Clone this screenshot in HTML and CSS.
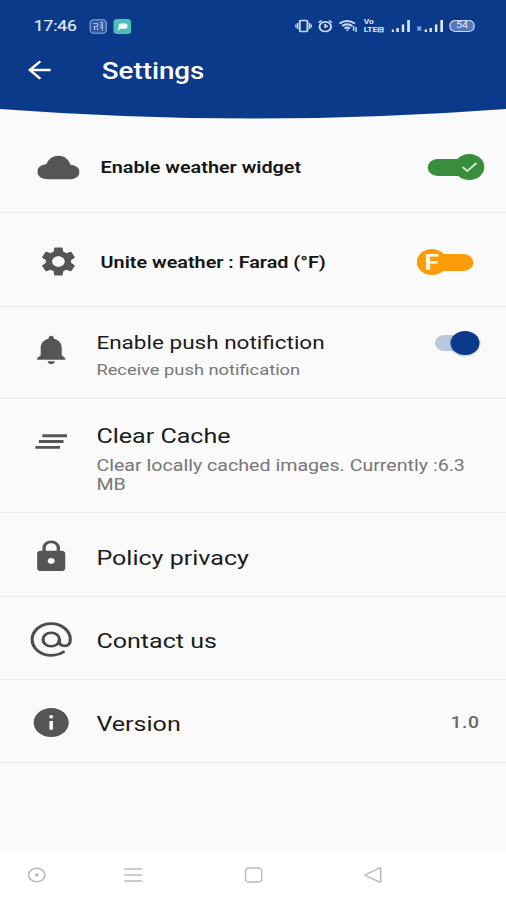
FILE: index.html
```html
<!DOCTYPE html>
<html lang="en">
<head>
<meta charset="utf-8">
<title>Settings</title>
<link rel="stylesheet" href="styles.css">
</head>
<body>
<div class="screen">
  <header class="header">
    <div class="status">
      <span class="time">17:46</span>
      <svg class="app-a" width="15" height="15" viewBox="0 0 15 15"><rect x=".8" y=".8" width="13.4" height="13.4" rx="3" fill="#315aa6" stroke="#8ba8dc"/><path d="M3.500 4.500H7M7 4.500v3H4.500v3.500M7 11V9M9 3.500h2v8M9 6h2M9 8.500h2" fill="none" stroke="#a9c0e8"/></svg>
      <svg class="app-b" width="15" height="15" viewBox="0 0 15 15"><rect width="15" height="15" rx="3.500" fill="#4ebfb8"/><path d="M6 4.500h4q1.800 0 1.800 1.500v2q0 1.800-1.800 1.800H6.500L3.500 11.500l1-3V6q0-1.500 1.500-1.500z" fill="#effffa"/></svg>
      <div class="indicators">
        <svg width="14" height="14" viewBox="0 0 14 14" fill="none" stroke="#cddcf5" stroke-width="1.600"><rect x="3.800" y="1.500" width="6.400" height="11" rx="1"/><path d="M2 4v6M12 4v6M.5 5.500v3M13.500 5.500v3" stroke-width="1.200"/></svg>
        <svg width="12" height="14" viewBox="0 0 12 14" fill="none" stroke="#cddcf5" stroke-width="1.600"><circle cx="6" cy="7.700" r="4.800"/><path d="M.5 3.500l2.500-2M11.500 3.500L9 1.500M6 5v3l2-1"/></svg>
        <svg width="16" height="14" viewBox="0 0 16 14" fill="none" stroke="#cddcf5" stroke-width="1.800"><path d="M.8 4.500q6.200-5 12.800 0M3 7q4.200-3.500 8.500 0M5 9.500q2.200-2 4.500 0"/><path d="M6 10.500l1.300 2 1.300-2z" fill="#cddcf5" stroke="none"/><path d="M12.500 7v5M14.500 8v5" stroke-width="1.200"/></svg>
        <span class="volte">Vo<br>LTE⊟</span>
        <svg width="16" height="14" viewBox="0 0 16 14" fill="#dbe8fb"><path d="M0 10.500h2V13H0zM4 9h2v4H4zM8.500 5.500h2V13h-2zM13 1h2.200v12H13z"/></svg>
        <svg width="22" height="14" viewBox="0 0 22 14" fill="#dbe8fb"><path d="M0 8l1-1 1 1 1-1 1 1-1 1.500 1 1.500-1 1-1-1-1 1-1-1 1-1.500z" fill="#88a9db"/><path d="M6.500 10.500h2V13h-2zM10.500 9h2v4h-2zM15 5.500h2V13h-2zM19.500 1h2.200v12h-2.200z"/></svg>
        <span class="battery">54</span>
      </div>
    </div>
    <div class="appbar">
      <svg width="20" height="20" viewBox="0 0 20 20" fill="none" stroke="#fff" stroke-width="2.300"><path d="M19 10H2M10.500 1.200L1.800 10l8.700 8.800"/></svg>
      <h1>Settings</h1>
    </div>
    <svg class="curve" viewBox="0 0 420 10" preserveAspectRatio="none"><path d="M0 0Q210 19 420 0z" fill="#0b3a8a"/></svg>
  </header>

  <main>
    <div class="row widget">
      <svg class="icon" viewBox="0 0 35 35"><path d="M9 29.300C3.500 29.300 0 26.300 0 21.800c0-4.500 3.300-7.200 7.400-7.600C9.500 8.600 13 5.800 17.500 5.800s8.300 3 9.900 8.900c4.500.3 7.600 3.300 7.600 7.300 0 4.300-3.400 7.300-8 7.300z"/></svg>
      <span class="strong">Enable weather widget</span>
      <span class="toggle green"><span class="thumb"><svg width="16" height="14" viewBox="0 0 16 14"><path d="M2 7l3.800 4L13.500 3" fill="none" stroke="#d9f5d6" stroke-width="1.700"/></svg></span></span>
    </div>
    <div class="row unit">
      <svg class="icon" viewBox="0 0 24 24"><path d="M19.140 12.940c.04-.3.060-.610.060-.940 0-.320-.020-.640-.070-.940l2.030-1.580c.180-.140.230-.410.120-.610l-1.920-3.320c-.120-.220-.370-.290-.590-.220l-2.390.960c-.5-.380-1.030-.7-1.620-.940l-.360-2.540c-.04-.240-.240-.410-.480-.410h-3.840c-.240 0-.430.170-.470.410l-.360 2.540c-.590.240-1.130.570-1.620.940l-2.390-.960c-.220-.080-.470 0-.590.220L2.740 8.870c-.12.210-.08.470.12.610l2.030 1.580c-.05.3-.09.630-.09.940s.02.640.07.940l-2.030 1.580c-.18.140-.23.410-.12.610l1.920 3.320c.12.220.37.290.59.220l2.390-.96c.5.380 1.030.7 1.620.94l.36 2.540c.05.240.24.410.48.410h3.840c.24 0 .44-.17.47-.41l.36-2.540c.59-.24 1.130-.56 1.620-.94l2.390.96c.22.080.47 0 .59-.22l1.920-3.320c.12-.22.07-.47-.12-.61l-2.010-1.580zM12 15.600c-1.980 0-3.600-1.620-3.600-3.600s1.620-3.600 3.600-3.600 3.600 1.620 3.600 3.600-1.620 3.600-3.600 3.600z"/></svg>
      <span class="strong">Unite weather : Farad (°F)</span>
      <span class="toggle orange"><span class="thumb">F</span></span>
    </div>
    <div class="row push">
      <svg class="icon" viewBox="0 0 24 24"><path d="M12 22c1.100 0 2-.9 2-2h-4c0 1.100.9 2 2 2zm6-6v-5c0-3.070-1.630-5.640-4.500-6.320V4c0-.830-.670-1.500-1.500-1.500s-1.500.670-1.500 1.500v.680C7.640 5.360 6 7.920 6 11v5l-2 2v1h16v-1l-2-2z"/></svg>
      <div class="copy"><div class="title small">Enable push notifiction</div><div class="sub">Receive push notification</div></div>
      <span class="switch"></span>
    </div>
    <div class="row cache">
      <svg class="icon" viewBox="0 0 24 24"><path d="M5 13h14v-2H5v2zm-2 4h14v-2H3v2zM7 7v2h14V7H7z"/></svg>
      <div class="copy"><div class="title">Clear Cache</div><div class="sub">Clear locally cached images. Currently :6.3 MB</div></div>
    </div>
    <div class="row policy">
      <svg class="icon" viewBox="0 0 24 24"><path d="M18 8h-1V6c0-2.760-2.240-5-5-5S7 3.240 7 6v2H6c-1.100 0-2 .9-2 2v10c0 1.100.9 2 2 2h12c1.100 0 2-.9 2-2V10c0-1.100-.9-2-2-2zm-6 9c-1.100 0-2-.9-2-2s.9-2 2-2 2 .9 2 2-.9 2-2 2zm3.100-9H8.900V6c0-1.710 1.390-3.100 3.100-3.100s3.100 1.390 3.100 3.100v2z"/></svg>
      <div class="title">Policy privacy</div>
    </div>
    <div class="row contact">
      <svg class="icon" viewBox="0 0 36 36"><g fill="none" stroke="#4d4d4d" stroke-width="2.700" stroke-linecap="round"><circle cx="18" cy="18" r="7"/><path d="M25 18v1.500q0 5 4.500 5 4.800 0 4.800-6.500A16.300 16.300 0 1 0 18 34.300q6.200 0 10.500-3.600"/></g></svg>
      <div class="title">Contact us</div>
    </div>
    <div class="row version">
      <svg class="icon" viewBox="0 0 24 24"><path d="M12 2C6.480 2 2 6.480 2 12s4.480 10 10 10 10-4.480 10-10S17.520 2 12 2zm1 15h-2v-6h2v6zm0-8h-2V7h2v2z"/></svg>
      <div class="title">Version</div>
      <span class="number">1.0</span>
    </div>
  </main>

  <nav class="nav">
    <svg width="15" height="16" viewBox="0 0 15 16"><circle cx="7.500" cy="8" r="6.800"/><circle cx="7.500" cy="8" r="1" fill="#aaa"/></svg>
    <svg width="15" height="16" viewBox="0 0 15 16"><path d="M0 2h15M0 8h15M0 14h15"/></svg>
    <svg width="15" height="16" viewBox="0 0 15 16"><rect x=".7" y="1" width="13.600" height="14" rx="3"/></svg>
    <svg width="15" height="16" viewBox="0 0 15 16"><path d="M14 1.500v13.200q0 .8-.8.400L1.500 8.600q-.8-.5 0-1L13.200.9q.8-.3.800.6z"/></svg>
  </nav>
</div>
</body>
</html>
```
FILE: styles.css
```css
* { box-sizing: border-box; }
body {
  margin: 0;
  overflow: hidden;
  background: #fafafa;
  font-family: Roboto, "Liberation Sans", sans-serif;
}
/* 420px wide layout, widened to fill the 506px viewport */
.screen {
  width: 420px;
  height: 900px;
  display: flex;
  flex-direction: column;
  transform: scaleX(1.20476);
  transform-origin: 0 0;
  background: #fafafa;
}
svg { display: block; flex: none; }

.header { height: 122px; color: #fff; background: linear-gradient(#0b3a8a 109px, #fafafa 109px); }
.status { height: 52px; display: flex; align-items: center; padding-left: 28px; padding-right: 26px; }
.time { width: 46px; font-size: 14.5px; letter-spacing: -.1px; color: #e2ebfa; -webkit-text-stroke: .2px #e2ebfa; }
.app-b { margin-left: 5px; }
.indicators { margin-left: auto; display: flex; align-items: center; gap: 5px; }
.volte { width: 18px; font-size: 7px; line-height: 8px; font-weight: 700; color: #dbe8fb; white-space: nowrap; letter-spacing: -.1px; }
.battery { width: 21px; height: 12px; border: 1.5px solid #cddcf5; border-radius: 5px; background: #5478b9; font-size: 9px; line-height: 9px; text-align: center; color: #e2ebfa; }
.appbar { height: 57px; display: flex; align-items: flex-start; padding: 8px 0 0 23px; }
h1 { margin: -2px 0 0 41.5px; font-size: 23px; line-height: 27px; font-weight: 500; }
.curve { width: 420px; height: 10px; }

.row { display: flex; align-items: center; padding-left: 25px; padding-right: 22px; border-bottom: 1px solid #ececec; }
.icon { width: 35px; height: 35px; fill: #555; }
.copy, .title { margin-left: 20px; }
.copy .title { margin-left: 0; }
.title { font-size: 20.8px; line-height: 25px; color: #1c1c1c; }
.title.small { font-size: 18.7px; }
.sub { font-size: 15.2px; line-height: 18.5px; color: #777; }
.strong { margin-left: 18px; font-size: 16.45px; font-weight: 600; color: #161616; }

.widget { height: 91px; padding-left: 30.5px; padding-right: 18px; }
.unit { height: 94px; padding: 5px 27px 0 30.5px; }
.unit .icon { margin-top: -2px; }
.push { height: 92px; align-items: flex-start; padding-top: 24px; }
.push .icon { margin-top: 1px; }
.push .sub { margin-top: 5px; }
.cache { height: 114px; align-items: flex-start; padding-top: 25px; }
.cache .sub { margin-top: 8px; width: 312px; font-size: 16.3px; }
.policy { height: 84px; padding-top: 4px; }
.policy .title, .contact .title, .version .title { padding-top: 3px; }
.contact { height: 83px; padding-top: 3px; }
.version { height: 83px; padding-top: 3px; }
.number { margin-left: auto; font-size: 16px; font-weight: 500; color: #666; letter-spacing: .5px; }

.toggle { margin-left: auto; width: 47px; height: 26px; display: flex; align-items: center; }
.thumb { width: 25px; height: 26px; border-radius: 50%; display: flex; align-items: center; justify-content: center; z-index: 1; }
.green::before, .orange::after { content: ""; height: 17px; flex: 1; }
.green::before { background: #388e3c; border-radius: 9px 0 0 9px; margin-right: -8px; }
.green .thumb { background: #388e3c; }
.orange::after { background: #fb9c08; border-radius: 0 9px 9px 0; margin-left: -8px; }
.orange .thumb { background: #fb9c08; color: #fff8e6; font-size: 22px; font-weight: 700; }

.switch { margin: -1px 0 0 auto; width: 37px; height: 26px; display: flex; align-items: center; }
.switch::before { content: ""; width: 22px; height: 16px; border-radius: 8px 0 0 8px; background: #bac7de; }
.switch::after { content: ""; width: 24px; height: 24px; margin-left: -9px; flex: none; border-radius: 50%; background: #0b3a8a; box-shadow: 0 1px 2px #0004; }

.nav { margin-top: auto; height: 50px; display: flex; align-items: center; padding-left: 23px; background: #fff; }
.nav svg { fill: none; stroke: #bbb; stroke-width: 1.4; }
.nav svg:nth-child(2) { margin-left: 65px; }
.nav svg:nth-child(3) { margin-left: 85px; }
.nav svg:nth-child(4) { margin-left: 84px; }
```
